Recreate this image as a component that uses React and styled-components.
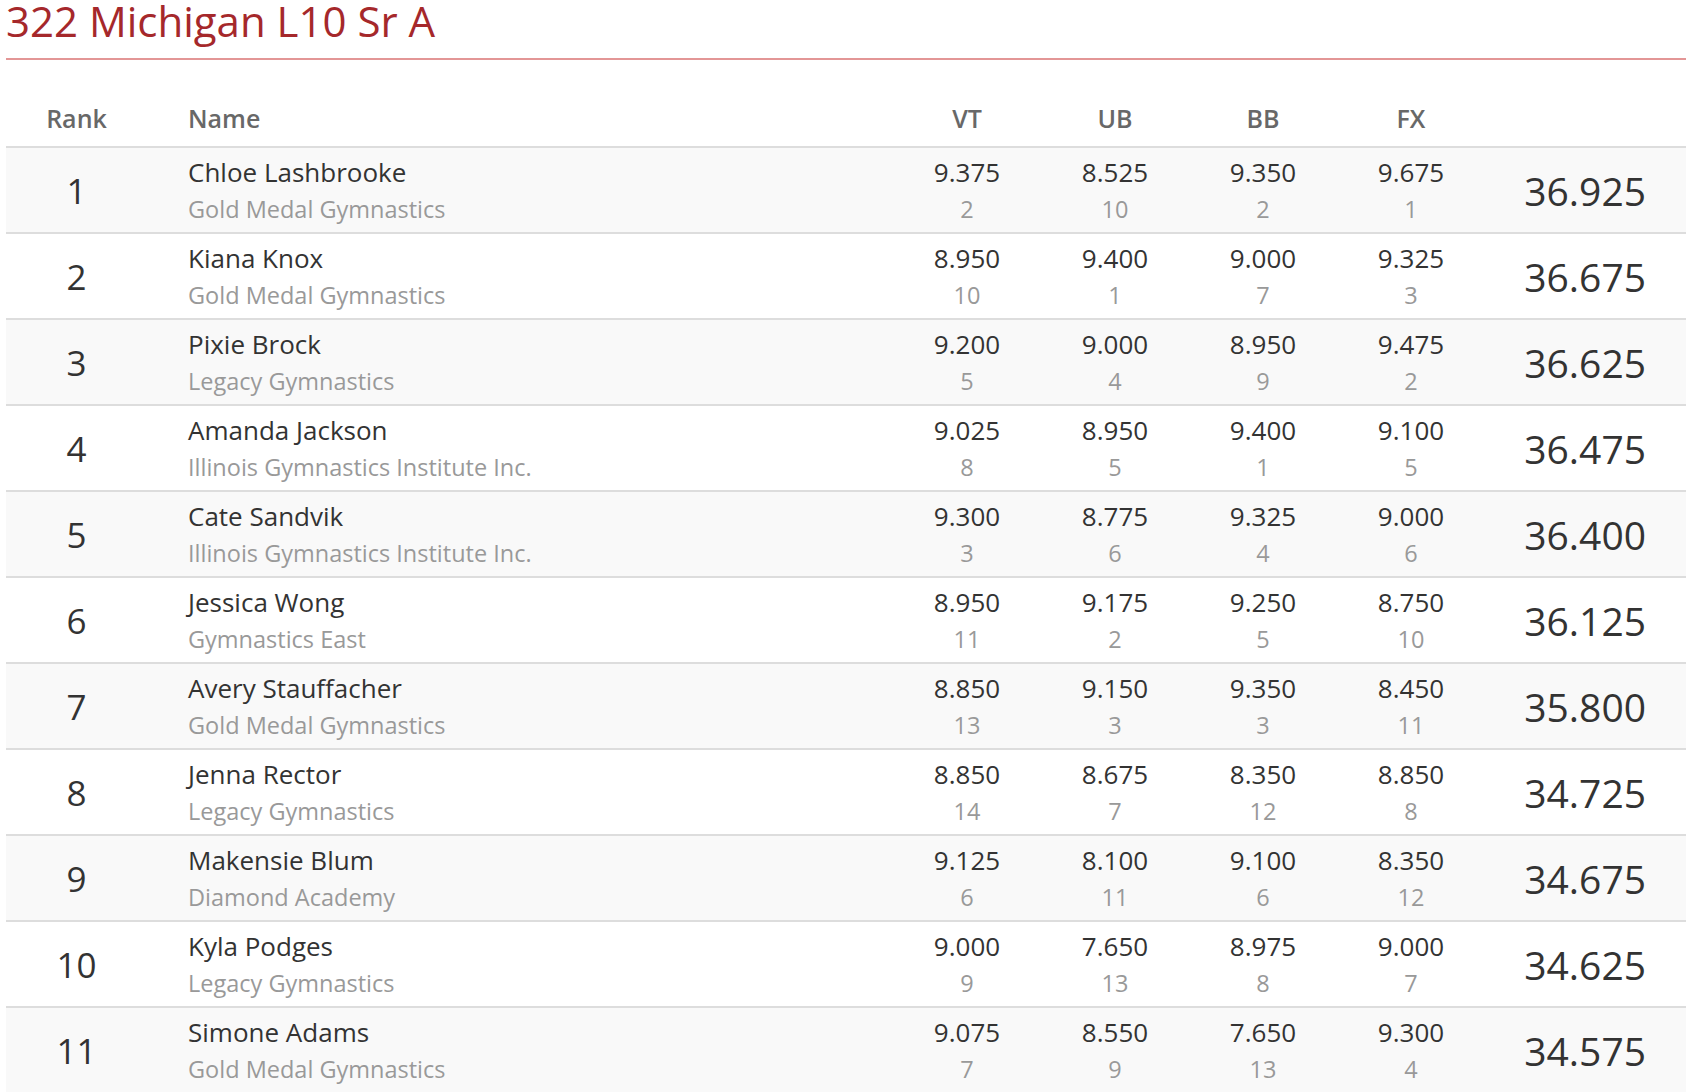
import React from 'react'
import styled, { createGlobalStyle } from 'styled-components'

const GlobalStyle = createGlobalStyle`
  html, body {
    margin: 0;
    padding: 0;
    background: #fff;
    overflow: hidden;
  }
  body {
    font-family: "Open Sans", "Liberation Sans", sans-serif;
    color: #333;
  }
`

const Page = styled.div`
  padding: 0 2px 0 6px;
`

const Title = styled.h1`
  margin: 0;
  font-size: 42px;
  line-height: 42px;
  font-weight: 400;
  color: #a5282b;
  padding-bottom: 16px;
  border-bottom: 2px solid #e39696;
`

const Grid = styled.div`
  display: grid;
  grid-template-columns: 141px 1fr 148px 148px 148px 148px 201px;
  align-items: center;
`

const HeadRow = styled(Grid)`
  margin-top: 41px;
  padding-bottom: 11px;
  font-size: 25px;
  line-height: 34px;
  font-weight: 600;
  color: #686868;
`

const HeadCell = styled.div`
  text-align: ${p => p.align || 'center'};
  padding-left: ${p => (p.align === 'left' ? '41px' : '0')};
`

const Row = styled(Grid)`
  border-top: 2px solid #ddd;
  height: 84px;
  background: ${p => (p.odd ? '#f9f9f9' : '#fff')};
`

const RankCell = styled.div`
  text-align: center;
  font-size: 35px;
  color: #333;
`

const Stack = styled.div`
  padding: 7px 0 3px;
  text-align: ${p => (p.left ? 'left' : 'center')};
  padding-left: ${p => (p.left ? '41px' : '0')};
  white-space: nowrap;
`

const Main = styled.div`
  font-size: 26px;
  line-height: 34px;
  color: #333;
`

const Sub = styled.div`
  font-size: 23.5px;
  line-height: 40px;
  color: #999;
`

const Total = styled.div`
  text-align: right;
  padding-right: 40px;
  font-size: 39px;
  color: #333;
`

const events = ['VT', 'UB', 'BB', 'FX']

const athletes = [
  { rank: 1, name: 'Chloe Lashbrooke', team: 'Gold Medal Gymnastics', scores: [['9.375', 2], ['8.525', 10], ['9.350', 2], ['9.675', 1]], total: '36.925' },
  { rank: 2, name: 'Kiana Knox', team: 'Gold Medal Gymnastics', scores: [['8.950', 10], ['9.400', 1], ['9.000', 7], ['9.325', 3]], total: '36.675' },
  { rank: 3, name: 'Pixie Brock', team: 'Legacy Gymnastics', scores: [['9.200', 5], ['9.000', 4], ['8.950', 9], ['9.475', 2]], total: '36.625' },
  { rank: 4, name: 'Amanda Jackson', team: 'Illinois Gymnastics Institute Inc.', scores: [['9.025', 8], ['8.950', 5], ['9.400', 1], ['9.100', 5]], total: '36.475' },
  { rank: 5, name: 'Cate Sandvik', team: 'Illinois Gymnastics Institute Inc.', scores: [['9.300', 3], ['8.775', 6], ['9.325', 4], ['9.000', 6]], total: '36.400' },
  { rank: 6, name: 'Jessica Wong', team: 'Gymnastics East', scores: [['8.950', 11], ['9.175', 2], ['9.250', 5], ['8.750', 10]], total: '36.125' },
  { rank: 7, name: 'Avery Stauffacher', team: 'Gold Medal Gymnastics', scores: [['8.850', 13], ['9.150', 3], ['9.350', 3], ['8.450', 11]], total: '35.800' },
  { rank: 8, name: 'Jenna Rector', team: 'Legacy Gymnastics', scores: [['8.850', 14], ['8.675', 7], ['8.350', 12], ['8.850', 8]], total: '34.725' },
  { rank: 9, name: 'Makensie Blum', team: 'Diamond Academy', scores: [['9.125', 6], ['8.100', 11], ['9.100', 6], ['8.350', 12]], total: '34.675' },
  { rank: 10, name: 'Kyla Podges', team: 'Legacy Gymnastics', scores: [['9.000', 9], ['7.650', 13], ['8.975', 8], ['9.000', 7]], total: '34.625' },
  { rank: 11, name: 'Simone Adams', team: 'Gold Medal Gymnastics', scores: [['9.075', 7], ['8.550', 9], ['7.650', 13], ['9.300', 4]], total: '34.575' },
]

const App = () => {
  return (
    <>
      <GlobalStyle />
      <Page>
        <Title>322 Michigan L10 Sr A</Title>
        <HeadRow>
          <HeadCell>Rank</HeadCell>
          <HeadCell align="left">Name</HeadCell>
          {events.map(ev => (
            <HeadCell key={ev}>{ev}</HeadCell>
          ))}
          <HeadCell />
        </HeadRow>
        {athletes.map((a, i) => (
          <Row key={a.rank} odd={i % 2 === 0}>
            <RankCell>{a.rank}</RankCell>
            <Stack left>
              <Main>{a.name}</Main>
              <Sub>{a.team}</Sub>
            </Stack>
            {a.scores.map(([score, place], j) => (
              <Stack key={j}>
                <Main>{score}</Main>
                <Sub>{place}</Sub>
              </Stack>
            ))}
            <Total>{a.total}</Total>
          </Row>
        ))}
      </Page>
    </>
  )
}

export default App
